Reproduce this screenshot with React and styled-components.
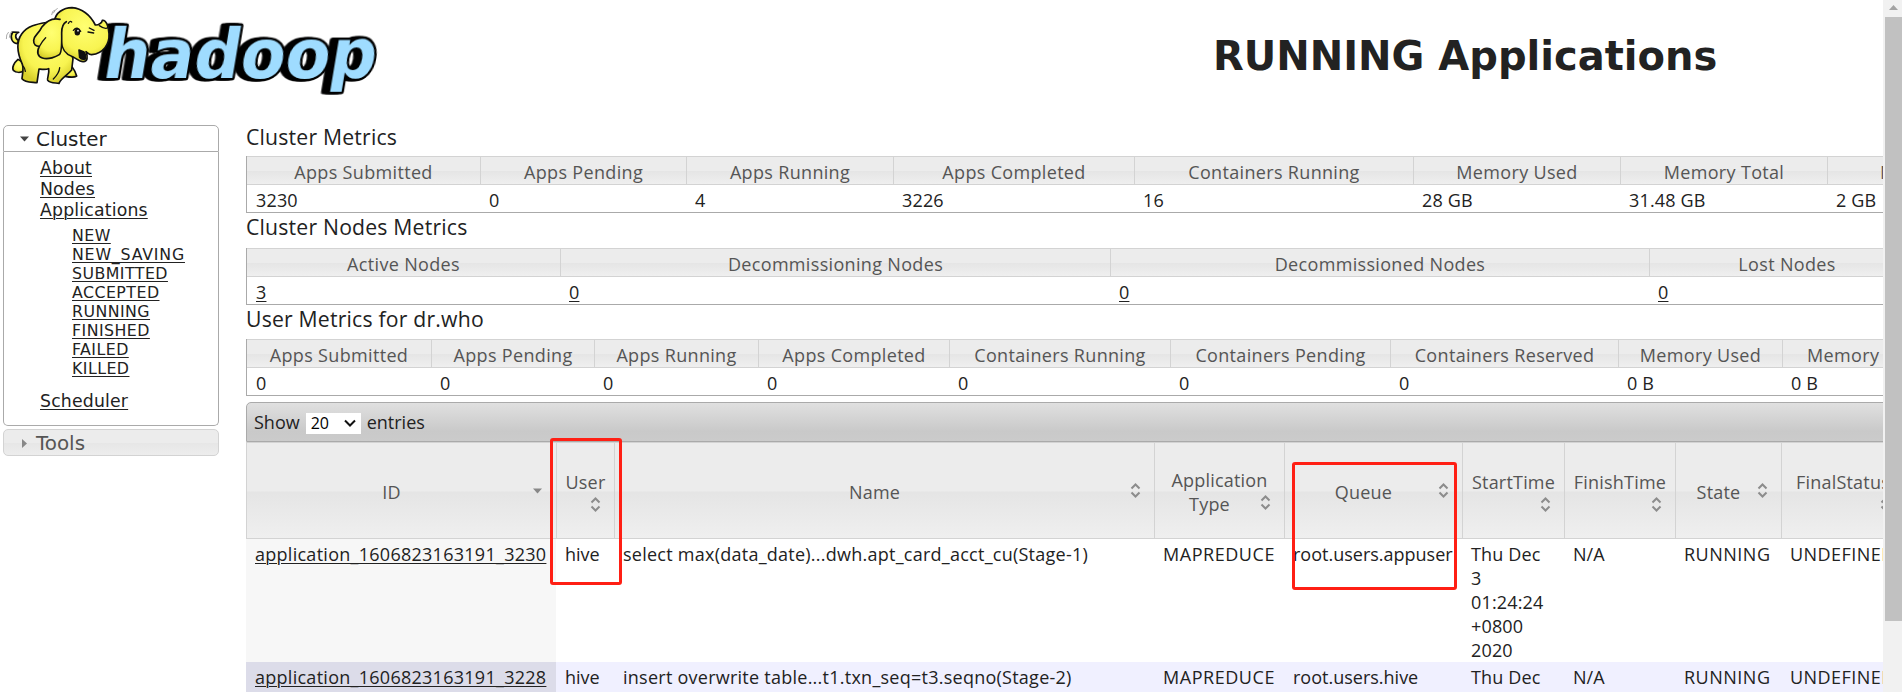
import React from "react";
import styled, { createGlobalStyle } from "styled-components";

const Global = createGlobalStyle`
  * { box-sizing: border-box; }
  body { margin: 0; background: #fff; overflow: hidden; }
`;

const Screen = styled.div`
  display: flex;
  position: relative;
  width: 1902px;
  height: 692px;
  overflow: hidden;
  color: #222;
  font-family: "Open Sans", "Noto Sans", sans-serif;
  font-size: 18px;
`;
const Page = styled.div`
  width: 1883px;
  height: 692px;
  overflow: hidden;
`;
const Header = styled.header`
  display: flex;
  height: 125px;
`;
const PageTitle = styled.h1`
  margin: 31px 0 0 823px;
  font: bold 40px/50px "DejaVu Sans", sans-serif;
  white-space: nowrap;
`;
const Body = styled.div`
  display: flex;
`;

/* sidebar */
const Sidebar = styled.nav`
  flex: none;
  width: 219px;
  margin-right: 27px;
  padding-left: 3px;
  font-family: "DejaVu Sans", sans-serif;
`;
const SectionHead = styled.div`
  display: flex;
  align-items: center;
  height: 27px;
  padding: 1px 0 0 16px;
  gap: 7px;
  border: 1px solid ${(p) => (p.$open ? "#aaa" : "#d3d3d3")};
  border-radius: ${(p) => (p.$open ? "5px 5px 0 0" : "5px")};
  background: ${(p) => (p.$open ? "#fff" : "linear-gradient(#ececec 50%, #e6e6e6 50%, #ededed)")};
  color: ${(p) => (p.$open ? "#212121" : "#555")};
  font-size: 19.9px;
`;
const Links = styled.div`
  display: flex;
  flex-direction: column;
  height: 274px;
  margin-bottom: 3px;
  padding: 6px 0 0 36px;
  border: 1px solid #aaa;
  border-top: 0;
  border-radius: 0 0 5px 5px;
`;
const NavLink = styled.a`
  align-self: flex-start;
  font-size: 17.3px;
  letter-spacing: 0.18px;
  line-height: 21px;
  text-decoration: underline;
  text-decoration-thickness: 1px;
  text-underline-offset: 2px;
`;
const SubLinks = styled.div`
  display: flex;
  flex-direction: column;
  margin: 5px 0 13px 32px;
`;
const SubLink = styled(NavLink)`
  font-size: 15.8px;
  letter-spacing: ${(p) => (p.$wide ? 0.8 : 0.45)}px;
  line-height: 19px;
`;

/* tables */
const Main = styled.main`
  flex: none;
  width: 1900px;
`;
const MetricsTitle = styled.h2`
  height: ${(p) => p.$height}px;
  margin: 0;
  padding-top: ${(p) => p.$drop}px;
  font-size: 21.2px;
  font-weight: 400;
  letter-spacing: 0.2px;
  line-height: ${(p) => (p.$drop ? 24 : 23)}px;
`;
const Metrics = styled.div`
  display: grid;
  grid-template-columns: ${(p) => p.$cols};
  border-left: 1px solid #aaa;
  border-bottom: 1px solid #aaa;
`;
const glass = "linear-gradient(#ececec 0 50%, #e5e5e5 52%, #efefef)";
const MetricHead = styled.div`
  height: 29px;
  padding-top: 1px;
  border: 1px solid #d3d3d3;
  border-left: 0;
  background: ${glass};
  color: #555;
  letter-spacing: 0.33px;
  line-height: 29px;
  text-align: center;
  white-space: nowrap;
`;
const MetricValue = styled.div`
  height: 27px;
  padding-left: ${(p) => (p.$first ? 9 : 8)}px;
  letter-spacing: 0.15px;
  line-height: 30px;
  white-space: nowrap;
`;
const Toolbar = styled.div`
  display: flex;
  align-items: center;
  height: 40px;
  margin-top: 6px;
  padding-left: 7px;
  border: 1px solid #aaa;
  border-radius: 5px 0 0 0;
  background: linear-gradient(#e0e0e0, #c9c9c9 75%, #cbcbcb);
`;
const PageSize = styled.span`
  display: flex;
  align-items: center;
  justify-content: space-between;
  width: 55px;
  height: 21px;
  margin: 2px 6px 0 6px;
  padding: 0 5px;
  background: #fff;
  color: #000;
  font-size: 16px;
`;
const AppsRow = styled.div`
  display: grid;
  grid-template-columns: 310px 58px 540px 130px 178px 102px 111px 106px 123px;
  background: ${(p) => (p.$odd ? "#f0f0ff" : "#fff")};
`;
const AppsHead = styled.div`
  display: flex;
  flex-direction: column;
  justify-content: center;
  height: 97px;
  padding: 2px 8px 0 8px;
  border: solid #d3d3d3;
  border-width: 1px 0 1px 1px;
  background: ${glass};
  color: #555;
  letter-spacing: 0.2px;
  line-height: 24px;
  text-align: center;
`;
const SortLabel = styled.div`
  display: flow-root;
`;
const SortIcon = styled.svg`
  float: right;
  width: 19px;
  height: 19px;
  margin: 1px 1px 0 0;
`;
const AppsCell = styled.div`
  height: 123px;
  padding: 3px 6px 0 9px;
  background: ${(p) => (p.$sorted ? (p.$odd ? "#dcdce9" : "#f7f7f7") : "transparent")};
  line-height: 24px;
  white-space: ${(p) => (p.$wrap ? "pre-line" : "nowrap")};
  letter-spacing: ${(p) => p.$tracking}px;
`;
const AppLink = styled.a`
  text-decoration: underline 1px;
  text-underline-offset: 2px;
`;

/* overlays and scrollbar */
const Marker = styled.div`
  position: absolute;
  left: ${(p) => p.$x}px;
  top: ${(p) => p.$y}px;
  width: ${(p) => p.$w}px;
  height: ${(p) => p.$h}px;
  border: 3px solid #ff1f14;
  border-radius: 3px;
`;
const Scrollbar = styled.div`
  display: flex;
  flex-direction: column;
  align-items: center;
  width: 19px;
  padding-left: 2px;
  background: #f1f1f1;
`;
const ScrollArrow = styled.svg`
  width: 17px;
  height: 17px;
`;
const Thumb = styled.div`
  width: 17px;
  height: 604px;
  background: #c1c1c1;
`;
const Wordmark = styled.text`
  font: bold 204px "DejaVu Sans", sans-serif;
  fill: #9fdcff;
  stroke: #000;
  stroke-width: 15px;
  stroke-linejoin: round;
  paint-order: stroke;
  filter: drop-shadow(-8px 0 0 #000) drop-shadow(-12px 0 0 #000);
`;

function Logo() {
  return (
    <svg width="390" height="100" viewBox="0 0 1170 300">
      <defs>
        <radialGradient id="skin" cx="0.55" cy="0.35" r="0.65">
          <stop offset="0" stopColor="#ffff72" />
          <stop offset="0.7" stopColor="#f8f451" />
          <stop offset="1" stopColor="#d8cf2b" />
        </radialGradient>
      </defs>
      <g transform="translate(303 234) skewX(-9.5)">
        <Wordmark textLength="818" lengthAdjust="spacingAndGlyphs">hadoop</Wordmark>
      </g>
      <g fill="url(#skin)" stroke="#111" strokeWidth="5" strokeLinejoin="round" strokeLinecap="round">
        <path d="M54 178C42 188 35 203 40 211C48 219 62 218 72 213L70 188Z" />
        <path d="M202 190C214 196 225 212 230 228C222 234 210 232 196 229L185 205Z" />
        <path d="M52 131C35 129 29 111 38 96L56 97C45 101 43 114 56 122Z" />
        <path d="M164 62C132 71 88 69 65 102C48 126 53 162 67 193C72 209 66 228 66 236C75 248 92 246 111 248L117 207C126 208 136 210 146 206C149 222 140 236 143 241C151 251 166 248 177 250C183 234 202 226 215 210L219 176L195 100Z" />
        <path d="M164 62C166 39 190 23 216 23C248 26 270 44 286 75C296 76 306 68 307 61C317 59 326 76 327 101C329 133 310 160 275 164C268 165 263 158 258 155C265 172 262 184 250 185C239 186 230 176 218 170C197 163 185 150 183 118Z" />
        <path d="M180 58C157 52 137 66 125 82C115 104 101 106 101 121C100 135 109 139 118 139C109 156 113 169 127 174C145 180 169 170 178 164C187 158 185 116 185 98C185 83 190 70 199 65" />
        <path d="M237 150L239 172Q245 181 257 176Q258 163 252 156Z" fill="#111" />
        <path d="M119 138C125 126 132 118 137 113M205 70Q210 61 215 66M220 91Q232 77 242 94M268 84L282 91M264 96L281 99M298 77Q315 89 324 83M160 237Q178 219 179 203M76 214Q75 205 70 199" fill="none" strokeWidth="4" />
        <ellipse cx="232" cy="96" rx="6" ry="8" fill="#111" />
        <circle cx="234" cy="92" r="2.5" fill="#fff" stroke="none" />
        <path d="M155 44Q155 32 165 30M160 39Q165 31 172 25M19 116Q18 103 25 97M28 112Q28 102 35 94" fill="none" stroke="#aaa" strokeWidth="3" />
      </g>
    </svg>
  );
}

function Sort({ desc }) {
  return (
    <SortIcon viewBox="0 0 19 19">
      {desc ? (
        <path d="M5 7.5H14L9.5 12.5Z" fill="#888" />
      ) : (
        <path d="M5.5 7.5L9.5 3.5L13.5 7.5M5.5 11.5L9.5 15.5L13.5 11.5" fill="none" stroke="#8c8c8c" strokeWidth="2" />
      )}
    </SortIcon>
  );
}

function MetricsTable({ title, titleHeight, drop, cols, heads, values, links }) {
  return (
    <>
      <MetricsTitle $height={titleHeight} $drop={drop}>{title}</MetricsTitle>
      <Metrics $cols={cols}>
        {heads.map((h) => <MetricHead key={h}>{h}</MetricHead>)}
        {values.map((v, i) => (
          <MetricValue key={i} $first={i === 0}>{links ? <AppLink>{v}</AppLink> : v}</MetricValue>
        ))}
      </Metrics>
    </>
  );
}

const states = ["NEW", "NEW_SAVING", "SUBMITTED", "ACCEPTED", "RUNNING", "FINISHED", "FAILED", "KILLED"];
const columns = ["ID", "User", "Name", "Application Type", "Queue", "StartTime", "FinishTime", "State", "FinalStatus"];
const tracking = [0.27, 0, 0.25, 0.55, 0, 0.15, 0, 0.5, 0.45];
const apps = [
  ["application_1606823163191_3230", "hive", "select max(data_date)...dwh.apt_card_acct_cu(Stage-1)", "MAPREDUCE", "root.users.appuser", "Thu Dec\n3\n01:24:24\n+0800\n2020", "N/A", "RUNNING", "UNDEFINED"],
  ["application_1606823163191_3228", "hive", "insert overwrite table...t1.txn_seq=t3.seqno(Stage-2)", "MAPREDUCE", "root.users.hive", "Thu Dec\n3", "N/A", "RUNNING", "UNDEFINED"],
];

export default function App() {
  return (
    <Screen>
      <Global />
      <Page>
        <Header>
          <Logo />
          <PageTitle>RUNNING Applications</PageTitle>
        </Header>
        <Body>
          <Sidebar>
            <SectionHead $open>
              <svg width="9" height="6"><path d="M0 0.5H9L4.5 5.5Z" fill="#444" /></svg>
              Cluster
            </SectionHead>
            <Links>
              <NavLink>About</NavLink>
              <NavLink>Nodes</NavLink>
              <NavLink>Applications</NavLink>
              <SubLinks>
                {states.map((s) => <SubLink key={s} $wide={s === "NEW_SAVING"}>{s}</SubLink>)}
              </SubLinks>
              <NavLink>Scheduler</NavLink>
            </Links>
            <SectionHead>
              <svg width="9" height="9"><path d="M2 0V9L7 4.5Z" fill="#888" /></svg>
              Tools
            </SectionHead>
          </Sidebar>
          <Main>
            <MetricsTable
              title="Cluster Metrics"
              titleHeight={31}
              drop={0}
              cols="234px 206px 207px 241px 279px 207px 207px 262px"
              heads={["Apps Submitted", "Apps Pending", "Apps Running", "Apps Completed", "Containers Running", "Memory Used", "Memory Total", "Memory Reserved"]}
              values={["3230", "0", "4", "3226", "16", "28 GB", "31.48 GB", "2 GB"]}
            />
            <MetricsTable
              title="Cluster Nodes Metrics"
              titleHeight={35}
              drop={2}
              cols="314px 550px 539px 275px"
              heads={["Active Nodes", "Decommissioning Nodes", "Decommissioned Nodes", "Lost Nodes"]}
              values={["3", "0", "0", "0"]}
              links
            />
            <MetricsTable
              title="User Metrics for dr.who"
              titleHeight={34}
              drop={2}
              cols="185px 163px 164px 191px 221px 220px 228px 164px 197px"
              heads={["Apps Submitted", "Apps Pending", "Apps Running", "Apps Completed", "Containers Running", "Containers Pending", "Containers Reserved", "Memory Used", "Memory Pending"]}
              values={["0", "0", "0", "0", "0", "0", "0", "0 B", "0 B"]}
            />
            <Toolbar>
              Show
              <PageSize>
                20
                <svg width="12" height="8"><path d="M1 1.5L6 6.5L11 1.5" fill="none" stroke="#111" strokeWidth="2" /></svg>
              </PageSize>
              entries
            </Toolbar>
            <AppsRow>
              {columns.map((label, i) => (
                <AppsHead key={label}>
                  <SortLabel>{label} <Sort desc={i === 0} /></SortLabel>
                </AppsHead>
              ))}
            </AppsRow>
            {apps.map((app, r) => (
              <AppsRow key={app[0]} $odd={r === 1}>
                {app.map((v, i) => (
                  <AppsCell key={i} $sorted={i === 0} $odd={r === 1} $wrap={i === 5} $tracking={tracking[i]}>
                    {i === 0 ? <AppLink>{v}</AppLink> : v}
                  </AppsCell>
                ))}
              </AppsRow>
            ))}
          </Main>
        </Body>
      </Page>
      <Scrollbar>
        <ScrollArrow viewBox="0 0 17 17"><path d="M4 10H13L8.5 5Z" fill="#a3a3a3" /></ScrollArrow>
        <Thumb />
      </Scrollbar>
      <Marker $x={550} $y={438} $w={72} $h={147} />
      <Marker $x={1292} $y={462} $w={165} $h={128} />
    </Screen>
  );
}
